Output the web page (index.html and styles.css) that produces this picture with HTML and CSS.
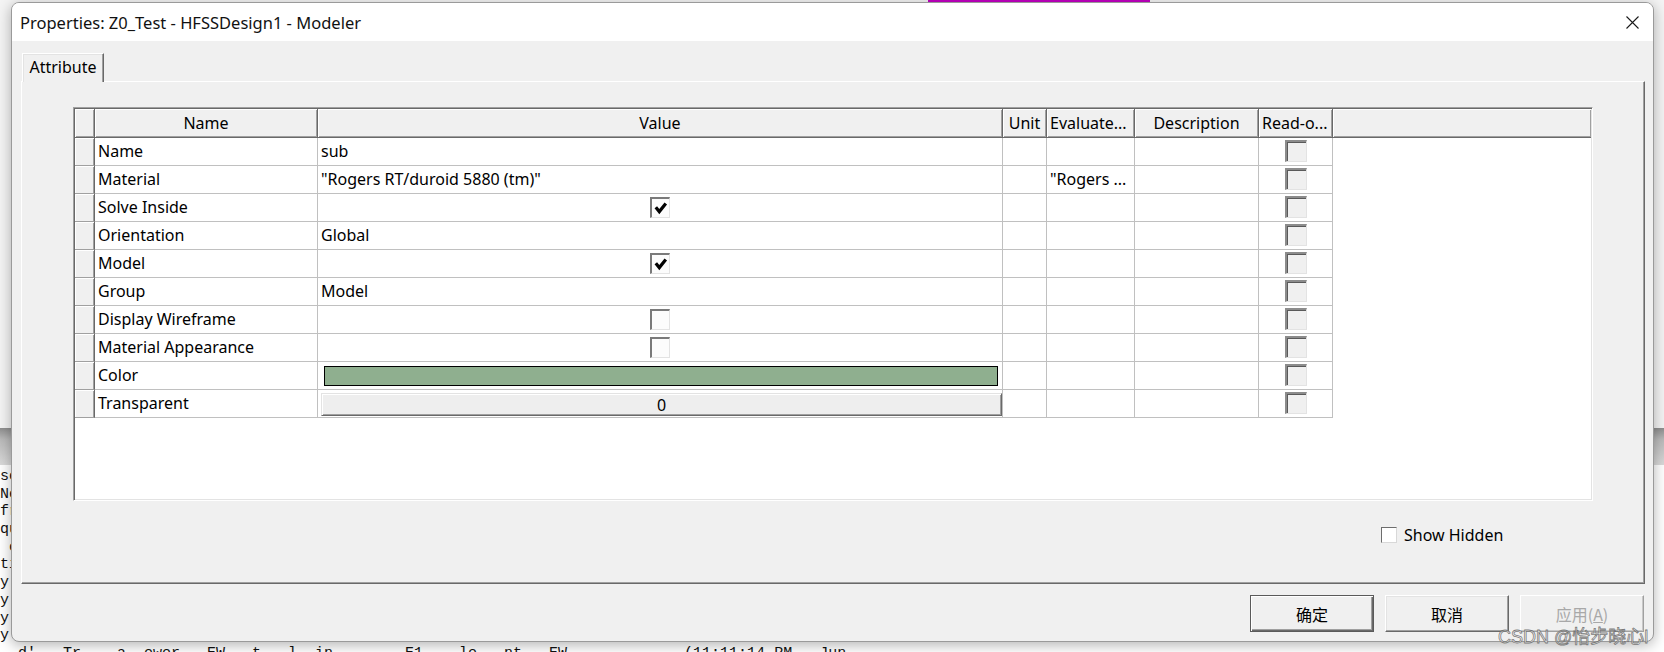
FILE: index.html
```html
<!DOCTYPE html>
<html>
<head>
<meta charset="utf-8">
<title>Properties</title>
<link rel="stylesheet" href="styles.css">
</head>
<body>
<div class="desktop">
  <div class="app-top"><div class="app-tab"></div></div>
  <div class="app-bar"></div>
  <div class="console">
    <div class="ln">so</div>
    <div class="ln">Ne</div>
    <div class="ln">fr</div>
    <div class="ln">qu</div>
    <div class="ln"> o</div>
    <div class="ln">ti</div>
    <div class="ln">y</div>
    <div class="ln">y</div>
    <div class="ln">y</div>
    <div class="ln">y</div>
    <div class="ln">  d'   Tr    a  ewer   EW   t   l  in   ..   E1   .le  .nt   EW   ..   ..   (11:11:14 PM   Jun</div>
  </div>
</div>

<div class="dialog">
  <div class="titlebar">
    <span class="title">Properties: Z0_Test - HFSSDesign1 - Modeler</span>
    <svg class="close" width="13" height="13" viewBox="0 0 13 13"><path d="M0.5 0.5 L12.5 12.5 M12.5 0.5 L0.5 12.5" stroke="#1a1a1a" stroke-width="1.1" fill="none"/></svg>
  </div>
  <div class="dbody">
    <div class="tabs"><div class="tab">Attribute</div></div>
    <div class="panel">
      <div class="grid">
        <div class="row head">
          <div class="c c0"></div>
          <div class="c c1">Name</div>
          <div class="c c2">Value</div>
          <div class="c c3">Unit</div>
          <div class="c c4 left">Evaluate...</div>
          <div class="c c5">Description</div>
          <div class="c c6 left">Read-o...</div>
          <div class="c cf"></div>
        </div>

        <div class="row">
          <div class="c c0"></div>
          <div class="c c1">Name</div>
          <div class="c c2">sub</div>
          <div class="c c3"></div>
          <div class="c c4"></div>
          <div class="c c5"></div>
          <div class="c c6"><span class="ro"></span></div>
        </div>
        <div class="row">
          <div class="c c0"></div>
          <div class="c c1">Material</div>
          <div class="c c2">"Rogers RT/duroid 5880 (tm)"</div>
          <div class="c c3"></div>
          <div class="c c4">"Rogers ...</div>
          <div class="c c5"></div>
          <div class="c c6"><span class="ro"></span></div>
        </div>
        <div class="row">
          <div class="c c0"></div>
          <div class="c c1">Solve Inside</div>
          <div class="c c2 mid"><span class="chk"><svg width="16" height="17" viewBox="0 0 16 17"><path d="M2.8 7.2 L6.3 11.6 L12.8 3.4" stroke="#000" stroke-width="3.2" fill="none"/></svg></span></div>
          <div class="c c3"></div>
          <div class="c c4"></div>
          <div class="c c5"></div>
          <div class="c c6"><span class="ro"></span></div>
        </div>
        <div class="row">
          <div class="c c0"></div>
          <div class="c c1">Orientation</div>
          <div class="c c2">Global</div>
          <div class="c c3"></div>
          <div class="c c4"></div>
          <div class="c c5"></div>
          <div class="c c6"><span class="ro"></span></div>
        </div>
        <div class="row">
          <div class="c c0"></div>
          <div class="c c1">Model</div>
          <div class="c c2 mid"><span class="chk"><svg width="16" height="17" viewBox="0 0 16 17"><path d="M2.8 7.2 L6.3 11.6 L12.8 3.4" stroke="#000" stroke-width="3.2" fill="none"/></svg></span></div>
          <div class="c c3"></div>
          <div class="c c4"></div>
          <div class="c c5"></div>
          <div class="c c6"><span class="ro"></span></div>
        </div>
        <div class="row">
          <div class="c c0"></div>
          <div class="c c1">Group</div>
          <div class="c c2">Model</div>
          <div class="c c3"></div>
          <div class="c c4"></div>
          <div class="c c5"></div>
          <div class="c c6"><span class="ro"></span></div>
        </div>
        <div class="row">
          <div class="c c0"></div>
          <div class="c c1">Display Wireframe</div>
          <div class="c c2 mid"><span class="chk"></span></div>
          <div class="c c3"></div>
          <div class="c c4"></div>
          <div class="c c5"></div>
          <div class="c c6"><span class="ro"></span></div>
        </div>
        <div class="row">
          <div class="c c0"></div>
          <div class="c c1">Material Appearance</div>
          <div class="c c2 mid"><span class="chk"></span></div>
          <div class="c c3"></div>
          <div class="c c4"></div>
          <div class="c c5"></div>
          <div class="c c6"><span class="ro"></span></div>
        </div>
        <div class="row">
          <div class="c c0"></div>
          <div class="c c1">Color</div>
          <div class="c c2 colorcell"><span class="swatch"></span></div>
          <div class="c c3"></div>
          <div class="c c4"></div>
          <div class="c c5"></div>
          <div class="c c6"><span class="ro"></span></div>
        </div>
        <div class="row">
          <div class="c c0"></div>
          <div class="c c1">Transparent</div>
          <div class="c c2 btncell"><span class="numbtn">0</span></div>
          <div class="c c3"></div>
          <div class="c c4"></div>
          <div class="c c5"></div>
          <div class="c c6"><span class="ro"></span></div>
        </div>
      </div>
      <div class="showhidden"><span class="cbox"></span><span class="shlabel">Show Hidden</span></div>
    </div>
    <div class="buttons">
      <div class="btn default">确定</div>
      <div class="btn">取消</div>
      <div class="btn disabled">应用(<u>A</u>)</div>
    </div>
  </div>
</div>
<div class="watermark">CSDN @怡步晓心l</div>
</body>
</html>
```

FILE: styles.css
```css
html, body {
  margin: 0;
  padding: 0;
}
body {
  width: 1664px;
  height: 652px;
  overflow: hidden;
  position: relative;
  font-family: "Noto Sans", "Noto Sans CJK SC", sans-serif;
  color: #000;
  background: #f3f3f3;
}

/* background application */
.desktop {
  height: 652px;
  display: flex;
  flex-direction: column;
  overflow: hidden;
}
.app-top {
  flex: none;
  height: 428px;
  background: #f4f4f4;
}
.app-tab {
  margin-left: 928px;
  width: 222px;
  height: 2px;
  background: #c300c3;
}
.app-bar {
  flex: none;
  height: 37px;
  background: linear-gradient(#8e8e8e, #b9b9b9 30%, #dadada);
}
.console {
  flex: 1;
  min-height: 0;
  overflow: hidden;
  background: #fff;
  padding-top: 3px;
  font-family: "Liberation Mono", monospace;
  font-size: 15px;
  color: #111;
}
.ln {
  height: 17.7px;
  line-height: 17.7px;
  white-space: pre;
}

/* dialog window */
.dialog {
  position: absolute;
  left: 11px;
  top: 2px;
  width: 1643px;
  height: 640px;
  box-sizing: border-box;
  border: 1px solid #9a9a9a;
  border-radius: 8px;
  background: #f0f0f0;
  box-shadow: 0 3px 14px rgba(0, 0, 0, 0.3);
  overflow: hidden;
  display: flex;
  flex-direction: column;
}
.titlebar {
  height: 38px;
  flex: none;
  background: #fff;
  display: flex;
  align-items: center;
  justify-content: space-between;
  padding: 0 14px 0 8px;
}
.title {
  font-family: "Noto Sans", sans-serif;
  font-size: 16.5px;
  color: #111;
}
.close {
  display: block;
}
.dbody {
  flex: 1;
  display: flex;
  flex-direction: column;
  padding: 12px 8px 0 9px;
}
.tabs {
  display: flex;
  height: 28px;
}
.tab {
  margin-left: 1px;
  width: 82px;
  height: 29px;
  box-sizing: border-box;
  border-top: 1px solid #fff;
  border-left: 1px solid #fff;
  border-right: 1px solid #696969;
  box-shadow: inset -1px 0 0 #a0a0a0, inset 1px 1px 0 #e3e3e3;
  background: #f0f0f0;
  font-size: 16px;
  display: flex;
  align-items: center;
  justify-content: center;
  padding-bottom: 3px;
  position: relative;
  z-index: 1;
}
.panel {
  width: 1624px;
  height: 503px;
  box-sizing: border-box;
  border-top: 1px solid #fff;
  border-left: 1px solid #fff;
  border-right: 1px solid #696969;
  border-bottom: 1px solid #696969;
  box-shadow: inset -1px -1px 0 #a0a0a0;
  padding: 25px 0 0 51px;
}

/* property grid */
.grid {
  width: 1520px;
  height: 394px;
  box-sizing: border-box;
  border-style: solid;
  border-width: 1px;
  border-color: #a0a0a0 #fff #fff #a0a0a0;
  padding: 1px;
  box-shadow: inset 1px 1px 0 #696969, inset -1px -1px 0 #e3e3e3;
  background: #fff;
  background-clip: padding-box;
  font-size: 16px;
}
.row {
  display: flex;
  height: 28px;
}
.row.head {
  height: 29px;
}
.c {
  box-sizing: border-box;
  height: 100%;
  border-right: 1px solid #c0c0c0;
  border-bottom: 1px solid #c0c0c0;
  display: flex;
  align-items: center;
  padding-left: 3px;
  padding-bottom: 1px;
  white-space: nowrap;
  overflow: hidden;
  background: #fff;
}
.c0 { width: 20px; }
.c1 { width: 223px; }
.c2 { width: 685px; }
.c3 { width: 44px; }
.c4 { width: 88px; }
.c5 { width: 124px; }
.c6 { width: 74px; justify-content: center; padding-left: 0; }
.cf { flex: 1; }

.row .c0 {
  background: #f0f0f0;
  border-right: 1px solid #696969;
  border-bottom: 1px solid #a0a0a0;
  box-shadow: inset 1px 1px 0 #fff, inset -1px 0 0 #a0a0a0;
}
.head .c {
  background: #f0f0f0;
  border-right: 1px solid #696969;
  border-bottom: 1px solid #696969;
  box-shadow: inset 1px 1px 0 #fff, inset -1px -1px 0 #a0a0a0;
  justify-content: center;
  padding-left: 0;
}
.head .c.left {
  justify-content: flex-start;
  padding-left: 3px;
}
.head .cf {
  border-right: none;
}
.c.mid {
  justify-content: center;
  padding-left: 0;
  padding-bottom: 0;
}
.chk {
  width: 20px;
  height: 21px;
  box-sizing: border-box;
  border-style: solid;
  border-width: 2px 1px 1px 2px;
  border-color: #7a7a7a #e3e3e3 #e3e3e3 #7a7a7a;
  background: #fcfcfc;
  display: flex;
  align-items: center;
  justify-content: center;
}
.chk svg {
  display: block;
}
.ro {
  width: 22px;
  height: 22px;
  box-sizing: border-box;
  border-style: solid;
  border-width: 2px 1px 1px 2px;
  border-color: #8c8c8c #e3e3e3 #e3e3e3 #8c8c8c;
  box-shadow: inset 1px 1px 0 #5a5a5a;
  background: #f0f0f0;
  margin-bottom: 1px;
}
.colorcell {
  padding: 0 4px 0 6px;
  align-items: flex-start;
}
.swatch {
  margin-top: 4px;
  flex: 1;
  height: 20px;
  box-sizing: border-box;
  border: 1px solid #000;
  background: #8faf8f;
}
.btncell {
  padding: 3px 0 1px 3px;
  align-items: stretch;
}
.numbtn {
  flex: 1;
  box-sizing: border-box;
  border-style: solid;
  border-width: 1px;
  border-color: #e3e3e3 #696969 #696969 #e3e3e3;
  box-shadow: inset 1px 1px 0 #fff, inset -1px -1px 0 #a0a0a0;
  background: #eeeeee;
  display: flex;
  align-items: center;
  justify-content: center;
}

/* show hidden */
.showhidden {
  display: flex;
  align-items: center;
  margin-top: 23px;
  padding-left: 1308px;
  font-size: 16px;
}
.cbox {
  width: 16px;
  height: 16px;
  box-sizing: border-box;
  border-style: solid;
  border-width: 1px;
  border-color: #6d6d6d #d8d8d8 #d8d8d8 #6d6d6d;
  background: #fff;
  margin-right: 7px;
}

/* buttons */
.buttons {
  display: flex;
  justify-content: flex-end;
  gap: 11px;
  margin-top: 11px;
  padding-right: 1px;
}
.btn {
  width: 124px;
  height: 37px;
  box-sizing: border-box;
  border-style: solid;
  border-width: 1px;
  border-color: #fff #696969 #696969 #fff;
  box-shadow: inset -1px -1px 0 #a0a0a0, inset 1px 1px 0 #e3e3e3;
  background: #f0f0f0;
  display: flex;
  align-items: center;
  justify-content: center;
  font-family: "Noto Sans CJK SC", sans-serif;
  font-size: 16px;
  color: #000;
}
.btn.default {
  border: 1px solid #5a5a5a;
  box-shadow: inset 1px 1px 0 #fff, inset -1px -1px 0 #696969, inset -2px -2px 0 #a0a0a0;
}
.btn.disabled {
  color: #a8a8a8;
  border-color: #fff #a0a0a0 #a0a0a0 #fff;
  box-shadow: inset -1px -1px 0 #c8c8c8;
}
.btn u {
  text-decoration: underline;
}

/* watermark overlay */
.watermark {
  position: absolute;
  left: 1498px;
  top: 622px;
  font-family: "Liberation Sans", "Noto Sans CJK SC", sans-serif;
  font-size: 18px;
  color: rgba(255, 255, 255, 0.7);
  -webkit-text-stroke: 0.8px rgba(100, 100, 100, 0.85);
  white-space: nowrap;
}
```
